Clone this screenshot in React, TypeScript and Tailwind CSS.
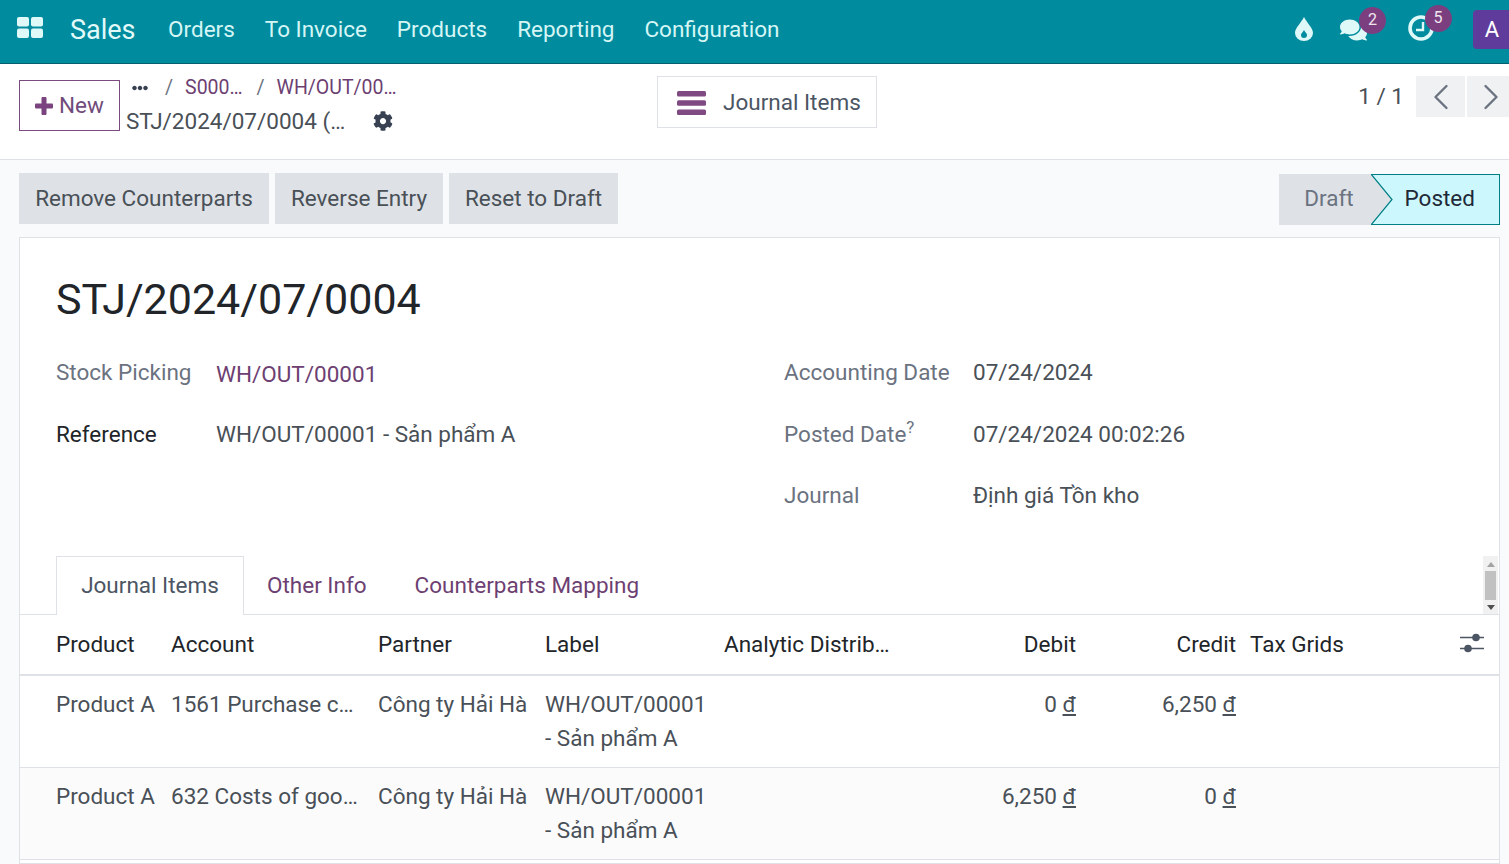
import * as React from 'react';
import { ChevronLeft, ChevronRight } from 'lucide-react';
import { FaCog, FaComments, FaEllipsisH } from 'react-icons/fa';

const navItems = ['Orders', 'To Invoice', 'Products', 'Reporting', 'Configuration'];

const rows = [
  { account: '1561 Purchase c…', debit: '0', credit: '6,250' },
  { account: '632 Costs of goo…', debit: '6,250', credit: '0' },
];

function Badge({ className, children }: { className: string; children: React.ReactNode }) {
  return (
    <span className={'absolute flex h-[27px] w-[27px] items-center justify-center rounded-full bg-[#7b3f7f] text-[16px] text-[#f0e4ef] ' + className}>
      {children}
    </span>
  );
}

function Money({ value }: { value: string }) {
  return (
    <>
      {value} <span className="underline">đ</span>
    </>
  );
}

function Field({
  label,
  value,
  labelClass,
  valueClass,
  rowClass,
}: {
  label: React.ReactNode;
  value: string;
  labelClass?: string;
  valueClass?: string;
  rowClass?: string;
}) {
  return (
    <div className={'flex items-center ' + (rowClass ?? 'h-[61px]')}>
      <div className={labelClass ?? 'w-[160px] text-[#6b7280]'}>{label}</div>
      <div className={valueClass ?? 'text-[#495057]'}>{value}</div>
    </div>
  );
}

export default function App() {
  return (
    <div className="flex h-[864px] w-[1509px] flex-col overflow-hidden bg-[#f9fafb] font-['Roboto',sans-serif] text-[22.5px] text-[#495057]">
      <nav className="flex h-[64px] shrink-0 items-center border-b border-[#04606c] bg-[#008c9e] pl-[17px] text-[#d6f6f6]">
        <svg width="26" height="21" viewBox="0 0 26 21" className="mb-[9px] mr-[27px] fill-[#dff8f8]">
          <rect x="0" y="0" width="12" height="9.5" rx="2" />
          <rect x="14" y="0" width="12" height="9.5" rx="2" />
          <rect x="0" y="11.5" width="12" height="9.5" rx="2" />
          <rect x="14" y="11.5" width="12" height="9.5" rx="2" />
        </svg>
        <span className="mb-[3px] mr-[32.5px] text-[27px] text-[#e2fafa]">Sales</span>
        <div className="mb-[4px] flex gap-[30px]">
          {navItems.map((item) => (
            <span key={item}>{item}</span>
          ))}
        </div>
        <div className="ml-auto flex items-center">
          <svg width="18" height="24" viewBox="0 0 18 24" className="mb-[6px] mr-[26px]">
            <path fill="#dff8f8" d="M9 0C12 6 18 11 18 16a9 8 0 0 1-18 0C0 11 6 6 9 0Z" />
            <path fill="#008c9e" d="M9 13C10 15 12 16.5 12 18a3 3 0 0 1-6 0C6 16.5 8 15 9 13Z" />
          </svg>
          <div className="relative mb-[4px] mr-[40px] h-[24px] w-[29px]">
            <FaComments className="h-[24px] w-[29px] text-[#dff8f8]" />
            <Badge className="left-[20px] top-[-11px]">2</Badge>
          </div>
          <div className="relative mb-[7px] mr-[39px] h-[26px] w-[26px]">
            <svg width="26" height="26" viewBox="0 0 26 26" fill="none" stroke="#dff8f8">
              <circle cx="13" cy="13" r="11" strokeWidth="3.6" />
              <path d="M15 7V15H8" strokeWidth="2.4" />
            </svg>
            <Badge className="left-[16.5px] top-[-10.5px]">5</Badge>
          </div>
          <div className="mb-[4px] flex h-[39px] w-[36px] items-center justify-center rounded-l-[4px] bg-[#5f3c9c] pl-[2px] text-[22px] text-white">A</div>
        </div>
      </nav>

      <header className="flex h-[96px] shrink-0 border-b border-[#dee2e6] bg-white">
        <div className="flex w-[657px] shrink-0 items-start pl-[19px] pt-[16px]">
          <button className="flex h-[51px] w-[101px] items-center justify-center gap-[6px] border border-[#7b4a7f] pt-[1px] text-[#714b7b]">
            <svg width="18" height="18" viewBox="0 0 18 18" className="fill-[#7b4480]">
              <rect x="6.5" y="0" width="5" height="18" rx="1" />
              <rect x="0" y="6.5" width="18" height="5" rx="1" />
            </svg>
            New
          </button>
          <div className="ml-[6px] mt-[-7px] flex flex-col">
            <div className="flex h-[30px] items-center pl-[6px] text-[19.5px] text-[#6d3f72]">
              <FaEllipsisH className="h-[16px] w-[16px] text-[#374151]" />
              <span className="ml-[17px] mr-[12px] text-[#6b7280]">/</span>
              <span>S000…</span>
              <span className="ml-[14px] mr-[12px] text-[#6b7280]">/</span>
              <span>WH/OUT/00…</span>
            </div>
            <div className="flex h-[37px] items-center">
              <span>STJ/2024/07/0004 (…</span>
              <FaCog className="mb-[2px] ml-[28px] h-[20px] w-[20px] text-[#374151]" />
            </div>
          </div>
        </div>
        <div className="pt-[12px]">
          <button className="flex h-[52px] w-[220px] items-center border border-[#dee2e6] pl-[19px] pt-[1px] text-[#4b5563]">
            <svg width="29" height="24" viewBox="0 0 29 24" className="mr-[17px] fill-[#7f4a82]">
              <rect x="0" y="0" width="29" height="5.4" rx="1.5" />
              <rect x="0" y="9.3" width="29" height="5.4" rx="1.5" />
              <rect x="0" y="18.6" width="29" height="5.4" rx="1.5" />
            </svg>
            Journal Items
          </button>
        </div>
        <div className="ml-auto flex items-start pt-[12px]">
          <span className="mr-[12px] flex h-[41px] items-center">1 / 1</span>
          <button className="flex h-[41px] w-[49px] items-center justify-center bg-[#f0f1f3]">
            <ChevronLeft size={44} className="shrink-0 text-[#6b7280]" strokeWidth={1.3} />
          </button>
          <button className="ml-[2px] flex h-[41px] w-[42px] items-center justify-center bg-[#f0f1f3] pl-[5px]">
            <ChevronRight size={44} className="shrink-0 text-[#6b7280]" strokeWidth={1.3} />
          </button>
        </div>
      </header>

      <div className="flex h-[77px] shrink-0 items-start pl-[19px] pr-[9px] pt-[13px]">
        <div className="flex gap-[6px]">
          <button className="h-[51px] w-[250px] bg-[#dee2e6] pt-[1px]">Remove Counterparts</button>
          <button className="h-[51px] w-[168px] bg-[#dee2e6] pt-[1px]">Reverse Entry</button>
          <button className="h-[51px] w-[169px] bg-[#dee2e6] pt-[1px]">Reset to Draft</button>
        </div>
        <div className="ml-auto mt-[1px] flex h-[51px] items-stretch">
          <div className="flex w-[92px] items-center justify-center bg-[#dee2e6] pb-[2px] pl-[8px] text-[#6b7280]">Draft</div>
          <div className="relative flex w-[129px] items-center justify-end border-y border-r border-[#017e84] bg-[#ccf8fd] pb-[2px] pr-[24px] text-[#1f2937]">
            <svg width="22" height="51" viewBox="0 0 22 51" className="absolute left-0 top-[-1px]">
              <path d="M0 0 L21 25.5 L0 51 Z" fill="#dee2e6" />
              <path d="M0 0 L21 25.5 L0 51" fill="none" stroke="#017e84" strokeWidth="1.2" />
            </svg>
            Posted
          </div>
        </div>
      </div>

      <main className="ml-[19px] mr-[9px] flex-1 border border-[#dee2e6] bg-white">
        <h1 className="flex h-[104px] items-center pl-[36px] pt-[18px] text-[43px] text-[#212529]">STJ/2024/07/0004</h1>

        <div className="flex pl-[36px]">
          <div className="w-[728px]">
            <Field label="Stock Picking" value="WH/OUT/00001" rowClass="h-[62px]" valueClass="pt-[4px] text-[#6d3f72]" />
            <Field label="Reference" value="WH/OUT/00001 - Sản phẩm A" labelClass="w-[160px] text-[#212529]" />
          </div>
          <div className="flex-1">
            <Field label="Accounting Date" value="07/24/2024" rowClass="h-[62px]" labelClass="w-[189px] text-[#6b7280]" />
            <Field
              label={
                <>
                  Posted Date<sup className="text-[17px]">?</sup>
                </>
              }
              value="07/24/2024 00:02:26"
              labelClass="w-[189px] text-[#6b7280]"
            />
            <Field label="Journal" value="Định giá Tồn kho" labelClass="w-[189px] text-[#6b7280]" />
          </div>
        </div>

        <div className="mt-[30px] flex h-[59px] items-stretch border-b border-[#dee2e6] pl-[36px] pr-px">
          <div className="mb-[-1px] flex w-[188px] items-center justify-center border-x border-t border-[#dee2e6] bg-white text-[#4b5563]">Journal Items</div>
          <div className="flex items-center pl-[23px] pt-[2px] text-[#6d3f72]">Other Info</div>
          <div className="flex items-center pl-[48px] pt-[2px] text-[#6d3f72]">Counterparts Mapping</div>
          <div className="ml-auto flex w-[15px] flex-col items-center bg-[#f1f1f1]">
            <span className="mt-[6px] h-0 w-0 border-x-[4px] border-b-[5px] border-x-transparent border-b-[#a3a3a3]" />
            <span className="mt-[4px] h-[29px] w-[11px] bg-[#c1c1c1]" />
            <span className="mt-[5px] h-0 w-0 border-x-[4px] border-t-[5px] border-x-transparent border-t-[#505050]" />
          </div>
        </div>

        <table className="w-full table-fixed border-collapse">
          <colgroup>
            <col className="w-[144px]" />
            <col className="w-[207px]" />
            <col className="w-[167px]" />
            <col className="w-[179px]" />
            <col className="w-[180px]" />
            <col className="w-[186px]" />
            <col className="w-[160px]" />
            <col className="w-[209px]" />
            <col />
          </colgroup>
          <thead>
            <tr className="h-[60px] border-b-2 border-[#dee2e6] text-[#212529]">
              <th className="pl-[36px] pr-[7px] text-left font-normal">Product</th>
              <th className="px-[7px] text-left font-normal">Account</th>
              <th className="px-[7px] text-left font-normal">Partner</th>
              <th className="px-[7px] text-left font-normal">Label</th>
              <th className="whitespace-nowrap px-[7px] text-left font-normal">Analytic Distrib…</th>
              <th className="px-[7px] text-right font-normal">Debit</th>
              <th className="px-[7px] text-right font-normal">Credit</th>
              <th className="px-[7px] text-left font-normal">Tax Grids</th>
              <th className="pb-[3px] pr-[15px]">
                <svg width="24" height="20" viewBox="0 0 24 20" className="ml-auto">
                  <path d="M0 4.5H24M0 15.5H24" stroke="#4b5563" strokeWidth="1.6" />
                  <circle cx="16" cy="4.5" r="3.8" fill="#4b5563" />
                  <circle cx="8" cy="15.5" r="3.8" fill="#4b5563" />
                </svg>
              </th>
            </tr>
          </thead>
          <tbody>
            {rows.map((r, i) => (
              <tr key={r.account} className={'h-[92px] border-b border-[#dee2e6] align-top leading-[34px] ' + (i === 1 ? 'bg-[#fbfbfc]' : '')}>
                <td className="whitespace-nowrap pl-[36px] pr-[7px] pt-[11px]">Product A</td>
                <td className="whitespace-nowrap px-[7px] pt-[11px]">{r.account}</td>
                <td className="whitespace-nowrap px-[7px] pt-[11px]">Công ty Hải Hà</td>
                <td className="px-[7px] pt-[11px]">WH/OUT/00001 - Sản phẩm A</td>
                <td className="px-[7px] pt-[11px]" />
                <td className="px-[7px] pt-[11px] text-right"><Money value={r.debit} /></td>
                <td className="px-[7px] pt-[11px] text-right"><Money value={r.credit} /></td>
                <td />
                <td />
              </tr>
            ))}
          </tbody>
        </table>
      </main>
    </div>
  );
}
